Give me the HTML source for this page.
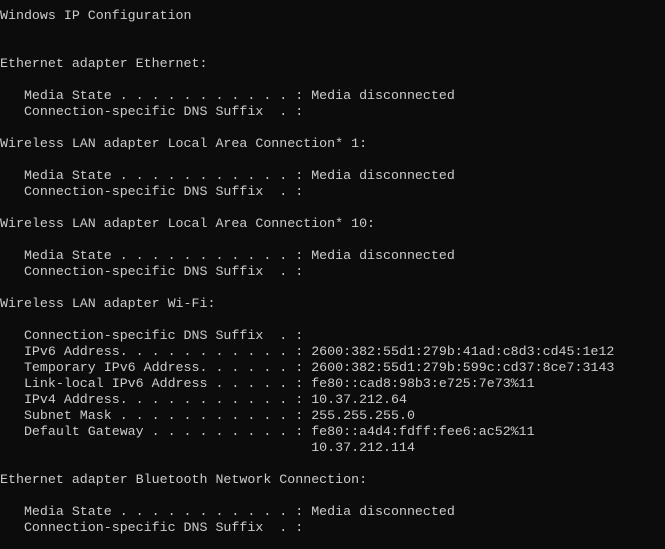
<!DOCTYPE html>
<html><head><style>
html,body{margin:0;padding:0;background:#0c0c0c;width:665px;height:549px;overflow:hidden}
pre{margin:0;padding:8px 0 0 0;font-family:"Liberation Mono",monospace;font-size:13.3px;line-height:16px;color:#cccccc;white-space:pre}
</style></head><body><pre>Windows IP Configuration


Ethernet adapter Ethernet:

   Media State . . . . . . . . . . . : Media disconnected
   Connection-specific DNS Suffix  . :

Wireless LAN adapter Local Area Connection* 1:

   Media State . . . . . . . . . . . : Media disconnected
   Connection-specific DNS Suffix  . :

Wireless LAN adapter Local Area Connection* 10:

   Media State . . . . . . . . . . . : Media disconnected
   Connection-specific DNS Suffix  . :

Wireless LAN adapter Wi-Fi:

   Connection-specific DNS Suffix  . :
   IPv6 Address. . . . . . . . . . . : 2600:382:55d1:279b:41ad:c8d3:cd45:1e12
   Temporary IPv6 Address. . . . . . : 2600:382:55d1:279b:599c:cd37:8ce7:3143
   Link-local IPv6 Address . . . . . : fe80::cad8:98b3:e725:7e73%11
   IPv4 Address. . . . . . . . . . . : 10.37.212.64
   Subnet Mask . . . . . . . . . . . : 255.255.255.0
   Default Gateway . . . . . . . . . : fe80::a4d4:fdff:fee6:ac52%11
                                       10.37.212.114

Ethernet adapter Bluetooth Network Connection:

   Media State . . . . . . . . . . . : Media disconnected
   Connection-specific DNS Suffix  . :
</pre></body></html>
